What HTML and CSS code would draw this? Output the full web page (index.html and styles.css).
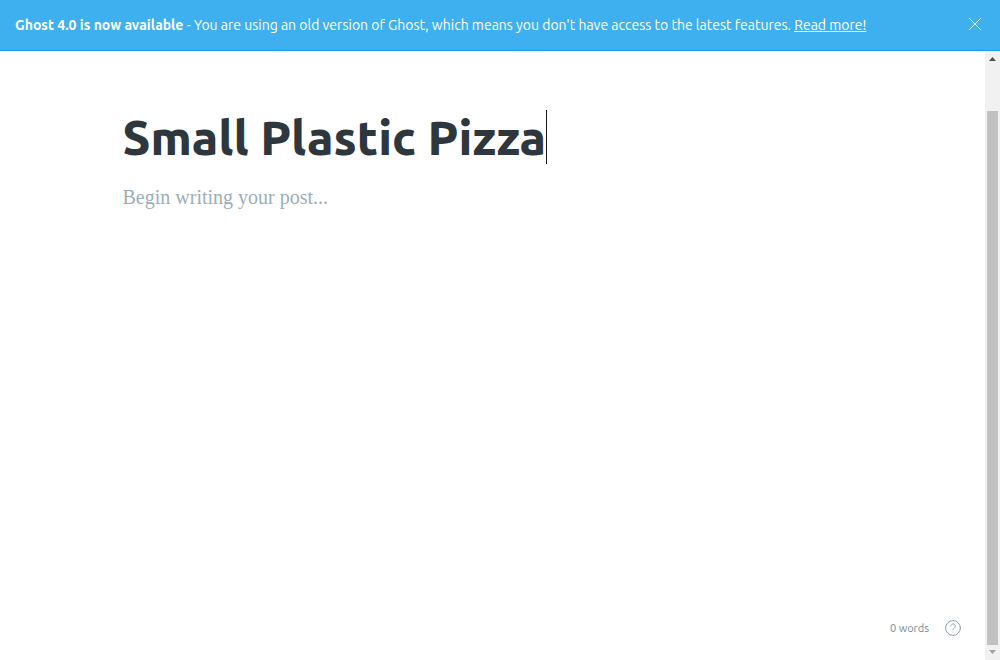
FILE: index.html
```html
<!DOCTYPE html>
<html lang="en">
<head>
<meta charset="utf-8">
<meta name="viewport" content="width=device-width, initial-scale=1">
<title>Small Plastic Pizza</title>
<link rel="stylesheet" href="styles.css">
</head>
<body>
<aside class="notice">
  <p class="notice-text"><b>Ghost 4.0 is now available</b> - You are using an old version of Ghost, which means you don't have access to the latest features. <a href="#">Read more!</a></p>
  <button class="notice-close" type="button" aria-label="Close">
    <svg width="12" height="12" viewBox="0 0 12 12" fill="none" stroke="currentColor"><path d="M0 0L12 12M12 0L0 12"/></svg>
  </button>
</aside>
<div class="workspace">
  <main class="editor">
    <form class="post">
      <div class="title-row">
        <input class="title" type="text" aria-label="Post title" value="Small Plastic Pizza">
        <span class="caret"></span>
      </div>
      <textarea class="content" aria-label="Post content" placeholder="Begin writing your post..."></textarea>
    </form>
    <footer class="status">
      <span>0 words</span>
      <a class="help" href="#" aria-label="Help">
        <svg width="16" height="16" viewBox="0 0 16 16" fill="none" stroke="currentColor" stroke-linecap="round" stroke-linejoin="round"><circle cx="8" cy="8" r="7.4"/><path stroke-width=".9" d="M5.7 6.1a2.3 2.3 0 1 1 3.5 2C8.400 8.600 8 8.900 8 9.900"/><circle cx="8" cy="11.900" r=".5" fill="currentColor" stroke="none"/></svg>
      </a>
    </footer>
  </main>
  <div class="scrollbar" aria-hidden="true">
    <svg width="15" height="17" viewBox="0 0 15 17"><path fill="#505050" d="M4 10h7L7.500 6z"/></svg>
    <div class="track"><div class="thumb"></div></div>
    <svg width="15" height="15" viewBox="0 0 15 15"><path fill="#a3a3a3" d="M4 5h7L7.500 9z"/></svg>
  </div>
</div>
</body>
</html>
```
FILE: styles.css
```css
* {
  box-sizing: border-box;
}

body {
  display: flex;
  flex-direction: column;
  min-height: 100vh;
  margin: 0;
  background: #fff;
  color: #2e373d;
  font-family: Ubuntu, "Open Sans", "Noto Sans", sans-serif;
}

.notice {
  display: flex;
  align-items: center;
  justify-content: space-between;
  padding: 15px;
  border-bottom: 1px solid #159df0;
  background: #3eb0ef;
  color: #fff;
}

.notice-text {
  margin: 0;
  font-size: 14px;
  line-height: 20px;
}

.notice-text a {
  color: inherit;
}

.notice-close {
  display: flex;
  padding: 0 4px 2px;
  border: 0;
  background: none;
  color: inherit;
}

.notice-close svg {
  stroke-width: 0.8;
}

.workspace {
  display: flex;
  flex: 1;
}

.editor {
  display: flex;
  flex: 1;
  flex-direction: column;
}

.post {
  display: flex;
  flex: 1;
  flex-direction: column;
  width: 100%;
  max-width: 740px;
  margin: 0 auto;
  padding-top: 58px;
}

.title-row {
  display: flex;
  align-items: center;
}

.title {
  field-sizing: content;
  min-width: 0;
  padding: 0;
  border: 0;
  outline: 0;
  background: none;
  color: inherit;
  font: 800 48px/56px Ubuntu, "Open Sans", "Noto Sans", sans-serif;
}

.caret {
  width: 1px;
  height: 54px;
  background: #15171a;
}

.content {
  flex: 1;
  margin-top: 20px;
  padding: 0;
  border: 0;
  outline: 0;
  resize: none;
  background: none;
  font: 20px/24px "Liberation Serif", serif;
}

.content::placeholder {
  color: #9baeb8;
}

.status {
  display: flex;
  align-items: center;
  justify-content: flex-end;
  gap: 16px;
  padding: 24px;
  color: #738a94;
  font-size: 11px;
  line-height: 16px;
}

.help {
  display: flex;
  color: #8ba0aa;
}

.scrollbar {
  display: flex;
  flex-direction: column;
  width: 15px;
  background: #f1f1f1;
}

.track {
  display: flex;
  flex: 1;
  flex-direction: column;
  justify-content: flex-end;
  padding: 0 2px;
}

.thumb {
  height: 92.5%;
  background: #c1c1c1;
}
```
